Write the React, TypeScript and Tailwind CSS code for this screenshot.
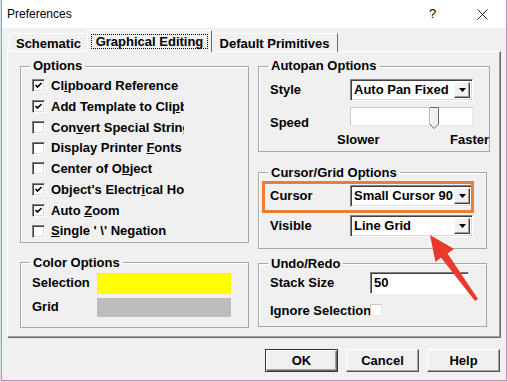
import React from "react";

const font = "font-['Liberation_Sans',Arial,sans-serif]";

function CheckBox({ checked }: { checked?: boolean }) {
  return (
    <div className="w-[13px] h-[13px] shrink-0 bg-white border border-t-[#808080] border-l-[#808080] border-r-white border-b-white shadow-[inset_1px_1px_0_#404040,inset_-1px_-1px_0_#dcdcdc] flex items-center justify-center">
      {checked && (
        <svg width="9" height="9" viewBox="0 0 9 9">
          <path d="M1.5 4 L3.5 6 L7.5 2" stroke="#000" strokeWidth="1.6" fill="none" />
        </svg>
      )}
    </div>
  );
}

function Combo({ value, w = "w-[123px]" }: { value: string; w?: string }) {
  return (
    <div
      className={`${w} h-[22px] bg-white border border-t-[#808080] border-l-[#808080] border-r-white border-b-white shadow-[inset_1px_1px_0_#404040,inset_-1px_-1px_0_#dcdcdc] flex items-center pl-[3px] pr-[2px]`}
    >
      <span className="flex-1 overflow-hidden whitespace-nowrap">{value}</span>
      <div className="w-[16px] h-[16px] shrink-0 bg-[#f0f0f0] border border-t-white border-l-white border-r-[#404040] border-b-[#404040] shadow-[inset_-1px_-1px_0_#a0a0a0] flex items-center justify-center">
        <svg width="7" height="4" viewBox="0 0 7 4">
          <path d="M0 0 H7 L3.5 4 Z" fill="#000" />
        </svg>
      </div>
    </div>
  );
}

function Group({
  title,
  className = "",
  inner = "",
  children,
}: {
  title: string;
  className?: string;
  inner?: string;
  children: React.ReactNode;
}) {
  return (
    <fieldset className={`border border-[#a8a8a8] shadow-[inset_1px_1px_0_#fff] ${className}`}>
      <legend className="ml-[9px] px-[3px] leading-[16px]">{title}</legend>
      <div className={inner}>{children}</div>
    </fieldset>
  );
}

const options: { label: React.ReactNode; checked: boolean }[] = [
  { label: <>Cl<u>i</u>pboard Reference</>, checked: true },
  { label: <>Add Template to Cli<u>p</u>board</>, checked: true },
  { label: <>Con<u>v</u>ert Special Strings</>, checked: false },
  { label: <>Display Printer <u>F</u>onts</>, checked: false },
  { label: <>Center of O<u>b</u>ject</>, checked: false },
  { label: <>Object's Electr<u>i</u>cal Hot Spot</>, checked: true },
  { label: <>Auto <u>Z</u>oom</>, checked: true },
  { label: <><u>S</u>ingle ' \' Negation</>, checked: false },
];

function Button({ label, def }: { label: string; def?: boolean }) {
  return (
    <div
      className={`w-[73px] h-[23px] flex items-center justify-center bg-[#f0f0f0] border ${
        def
          ? "border-[#333] shadow-[inset_1px_1px_0_#fff,inset_-1px_-1px_0_#6b6b6b,inset_-2px_-2px_0_#a0a0a0]"
          : "border-t-white border-l-white border-r-[#555] border-b-[#555] shadow-[inset_-1px_-1px_0_#a0a0a0]"
      }`}
    >
      {label}
    </div>
  );
}

export default function App() {
  return (
    <div className={`w-[508px] h-[382px] bg-[#d8dce6] ${font} text-[13px] font-bold text-black relative overflow-hidden`}>
      <div className="ml-[1px] w-[506px] h-[381px] border-x border-b border-[#cf86ad] flex flex-col">
        {/* title bar */}
        <div className="h-[28px] bg-white flex items-center pl-[5px] font-normal text-[12px]">
          <span className="flex-1">Preferences</span>
          <span className="w-[10px] mr-[38px] text-[13px]">?</span>
          <svg width="11" height="11" viewBox="0 0 11 11" className="mr-[18px]">
            <path d="M0.5 0.5 L10.5 10.5 M10.5 0.5 L0.5 10.5" stroke="#222" strokeWidth="1" />
          </svg>
        </div>

        <div className="flex-1 bg-[#f0f0f0] flex flex-col">
          {/* tabs */}
          <div className="h-[24px] flex items-end pl-[7px] -mb-px relative z-10">
            <div className="w-[78px] h-[19px] flex items-center justify-center border-t border-l border-t-white border-l-white pt-[1px]">
              Schematic
            </div>
            <div className="w-[125px] h-[22px] bg-[#f0f0f0] border-t border-l border-r border-t-white border-l-white border-r-[#6b6b6b] px-[3px] pt-[3px] pb-[3px]">
              <div className="h-full border border-dotted border-black flex items-center justify-center">
                Graphical Editing
              </div>
            </div>
            <div className="w-[126px] h-[19px] flex items-center justify-center border-t border-r border-t-white border-r-[#6b6b6b] pt-[1px]">
              Default Primitives
            </div>
          </div>

          {/* panel */}
          <div className="ml-[5px] w-[494px] h-[287px] border border-t-white border-l-white border-r-[#6b6b6b] border-b-[#6b6b6b] shadow-[inset_-1px_-1px_0_#a0a0a0] pl-[12px] pt-[6px] flex gap-[9px]">
            {/* left column */}
            <div className="w-[229px] flex flex-col">
              <Group title="Options" inner="pt-[1.5px]">
                {options.map((o, i) => (
                  <div key={i} className="h-[20.75px] flex items-center pl-[11px] gap-[6px]">
                    <CheckBox checked={o.checked} />
                    <span className="w-[133px] overflow-hidden whitespace-nowrap">{o.label}</span>
                  </div>
                ))}
              </Group>
              <Group title="Color Options" className="mt-[12px]" inner="pl-[11px] pb-[10px]">
                <div className="mt-[2px] h-[21px] flex items-center">
                  <span className="w-[65px]">Selection</span>
                  <div className="w-[134px] h-full bg-[#ffff00]" />
                </div>
                <div className="mt-[4px] h-[19px] flex items-center">
                  <span className="w-[65px]">Grid</span>
                  <div className="w-[134px] h-full bg-[#bdbdbd]" />
                </div>
              </Group>
            </div>

            {/* right column */}
            <div className="w-[229px] flex flex-col">
              <Group title="Autopan Options" inner="pl-[11px] pb-[2px]">
                <div className="mt-[5px] flex items-center">
                  <span className="w-[80px]">Style</span>
                  <Combo value="Auto Pan Fixed" />
                </div>
                <div className="mt-[6px] flex items-center">
                  <span className="w-[80px] relative top-[6px]">Speed</span>
                  <div className="relative w-[123px] h-[19px] bg-white border border-t-[#c8c8c8] border-l-[#c8c8c8] border-r-[#e8e8e8] border-b-[#e8e8e8]">
                    <svg width="11" height="22" viewBox="0 0 11 22" className="absolute left-[78px] -top-[1px]">
                      <path d="M1 0.5 H9.5 V17 L5 21.5 L1 17 Z" fill="#f0f0f0" stroke="#6b6b6b" />
                      <path d="M1.5 1 V17" stroke="#fff" />
                    </svg>
                  </div>
                </div>
                <div className="mt-[4px] h-[18px] flex items-center pl-[67px] overflow-hidden whitespace-nowrap">
                  <span className="w-[113px] shrink-0">Slower</span>
                  <span>Faster</span>
                </div>
              </Group>

              <Group title="Cursor/Grid Options" className="mt-[13px]" inner="pl-[11px] pb-[11px]">
                <div className="mt-[4px] flex items-center">
                  <span className="w-[80px]">Cursor</span>
                  <Combo value="Small Cursor 90" />
                </div>
                <div className="mt-[8px] flex items-center">
                  <span className="w-[80px]">Visible</span>
                  <Combo value="Line Grid" />
                </div>
              </Group>

              <Group title="Undo/Redo" className="mt-[7px]" inner="pl-[11px] pb-[6px]">
                <div className="flex items-center">
                  <span className="w-[100px]">Stack Size</span>
                  <div className="w-[99px] h-[22px] bg-white border border-t-[#808080] border-l-[#808080] border-r-white border-b-white shadow-[inset_1px_1px_0_#404040] flex items-center pl-[3px]">
                    50
                  </div>
                </div>
                <div className="mt-[7px] flex items-center">
                  <span className="w-[100px] overflow-hidden whitespace-nowrap">Ignore Selection</span>
                  <div className="w-[12px] h-[12px] bg-white border border-t-[#c8c8c8] border-l-[#c8c8c8] border-r-[#e8e8e8] border-b-[#e8e8e8]" />
                </div>
              </Group>
            </div>
          </div>

          {/* buttons */}
          <div className="mt-[11px] flex justify-end gap-[8px] pr-[6px]">
            <Button label="OK" def />
            <Button label="Cancel" />
            <Button label="Help" />
          </div>
        </div>
      </div>

      {/* annotation: highlight box */}
      <div className="absolute left-[262px] top-[181px] w-[212px] h-[32px] border-[3px] border-[#ec7d31] pointer-events-none" />
      {/* annotation: arrow */}
      <svg className="absolute left-0 top-0 pointer-events-none" width="508" height="382" viewBox="0 0 508 382">
        <polygon
          points="430,235 454,249 447.5,253.5 478,299 475,301 441,257.5 435.5,262"
          fill="#e8392b"
        />
      </svg>
    </div>
  );
}
